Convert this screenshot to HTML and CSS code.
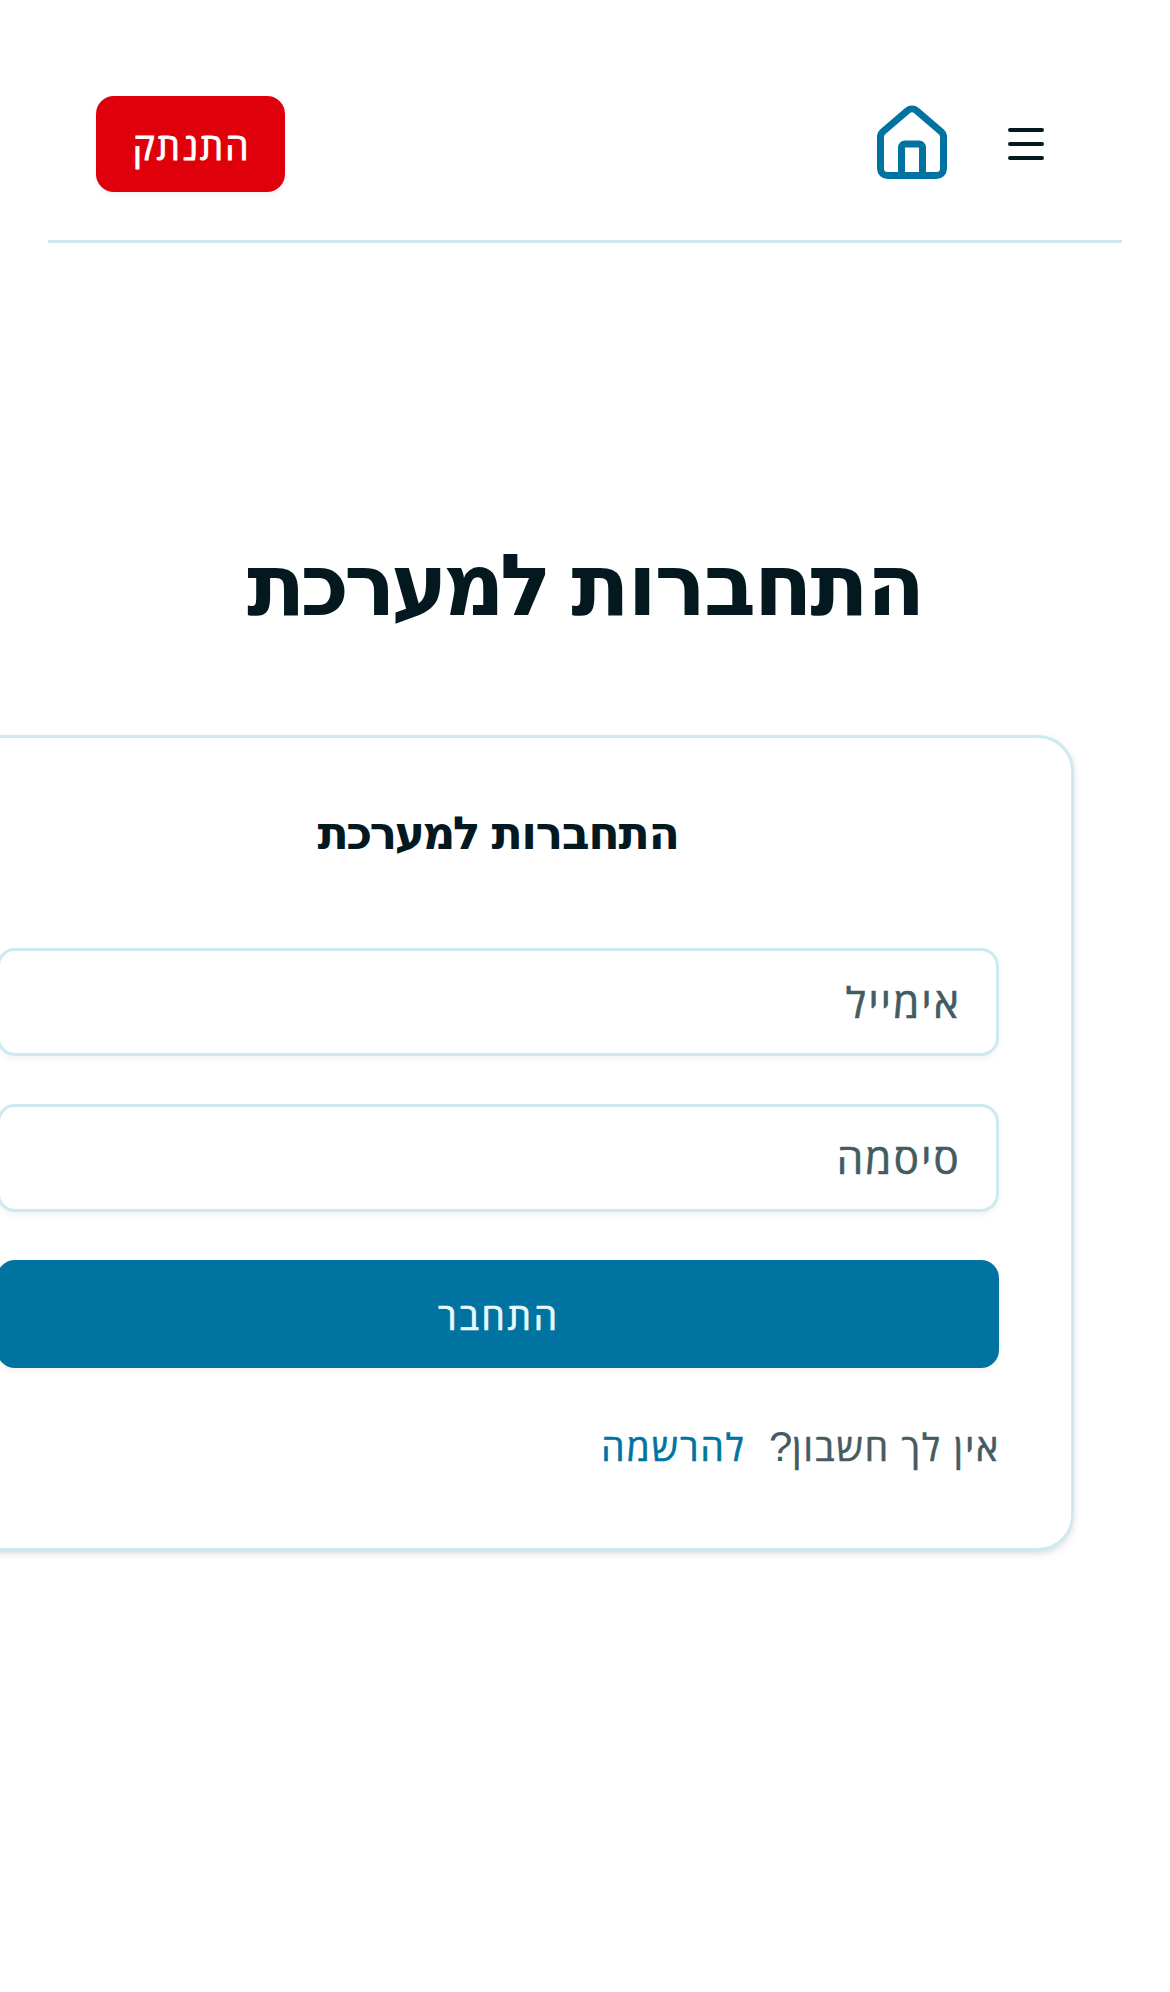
FILE: index.html
```html
<!DOCTYPE html>
<html lang="he" dir="rtl">
<head>
<meta charset="utf-8">
<title>התחברות למערכת</title>
<link rel="stylesheet" href="styles.css">
</head>
<body>
<header class="topbar">
  <nav class="nav">
    <button class="menu" aria-label="תפריט">
      <svg width="48" height="48" viewBox="0 0 24 24" fill="none" stroke="currentColor" stroke-width="2" stroke-linecap="round"><path d="M4 5h16M4 12h16M4 19h16"/></svg>
    </button>
    <a class="home" href="#" aria-label="בית">
      <svg width="84" height="84" viewBox="0 0 24 24" fill="none" stroke="currentColor" stroke-width="2" stroke-linecap="round" stroke-linejoin="round"><path d="M15 21v-8a1 1 0 0 0-1-1h-4a1 1 0 0 0-1 1v8"/><path d="M3 10a2 2 0 0 1 .709-1.528l7-5.999a2 2 0 0 1 2.582 0l7 5.999A2 2 0 0 1 21 10v9a2 2 0 0 1-2 2H5a2 2 0 0 1-2-2z"/></svg>
    </a>
  </nav>
  <button class="logout">התנתק</button>
</header>
<main class="page">
  <h1 class="heading">התחברות <span class="tight">למערכת</span></h1>
  <section class="card">
    <h2 class="title">התחברות <span class="tight">למערכת</span></h2>
    <form class="form">
      <input class="field" type="email" dir="rtl" placeholder="אימייל">
      <input class="field" type="password" dir="rtl" placeholder="סיסמה">
      <button class="submit" type="button">התחבר</button>
    </form>
    <p class="note"><span>אין לך חשבון<span class="mark">?</span></span><a class="link" href="#">להרשמה</a></p>
  </section>
</main>
</body>
</html>
```
FILE: styles.css
```css
* { box-sizing: border-box; margin: 0; }
html { overflow: hidden; }
body {
  background: #fff;
  color: #03191f;
  font-family: "Open Sans", "DejaVu Sans", sans-serif;
  font-size: 42px;
  overflow: hidden;
  height: 1992px;
}
button, input { font: inherit; border: 0; }
svg { display: block; }
.topbar {
  display: flex;
  justify-content: space-between;
  align-items: center;
  height: 243px;
  margin: 0 48px;
  padding: 48px 48px 0;
  border-bottom: 3px solid #cdeaf0;
}
.nav { display: flex; align-items: center; gap: 24px; }
.menu {
  display: grid;
  place-items: center;
  width: 96px;
  height: 96px;
  padding: 0;
  background: none;
  color: #03191f;
}
.home { color: #0073a0; }
.logout {
  width: 189px;
  height: 96px;
  padding: 3px 0 0 2px;
  border-radius: 18px;
  background: #df000c;
  color: #fff;
  font-size: 37px;
  font-weight: 500;
  letter-spacing: 1.9px;
  line-height: 60px;
  -webkit-text-stroke: .8px currentColor;
  box-shadow: 0 3px 6px rgba(0, 0, 0, .05);
}
.page { padding: 288px 96px 0; overflow: hidden; }
.heading {
  height: 108px;
  margin-bottom: 96px;
  font-family: "DejaVu Sans", sans-serif;
  font-size: 86px;
  font-weight: 700;
  letter-spacing: -2.5px;
  word-spacing: -3px;
  line-height: 108px;
  text-align: center;
}
.tight { letter-spacing: -.06em; }
.card {
  width: 1152px;
  height: 816px;
  margin-bottom: 24px;
  padding: 72px;
  border: 3px solid #cdeaf0;
  border-radius: 36px;
  box-shadow: 0 3px 9px rgba(0, 0, 0, .1), 0 3px 6px -3px rgba(0, 0, 0, .1);
}
.title {
  height: 48px;
  margin-bottom: 90px;
  font-family: "DejaVu Sans", sans-serif;
  font-size: 46px;
  font-weight: 600;
  letter-spacing: -1.5px;
  word-spacing: -1px;
  line-height: 47px;
  text-align: center;
}
.form { display: flex; flex-direction: column; gap: 48px; }
.field {
  width: 100%;
  height: 108px;
  padding: 0 35px 2px;
  border: 3px solid #cdeaf0;
  border-radius: 18px;
  background: transparent;
  letter-spacing: 2.3px;
  -webkit-text-stroke: .6px #435b61;
  box-shadow: 0 3px 6px rgba(0, 0, 0, .05);
}
.field::placeholder { color: #435b61; opacity: 1; }
.submit {
  height: 108px;
  padding: 3px 0 0 2px;
  border-radius: 18px;
  background: #0073a0;
  color: #e6fbff;
  font-size: 37px;
  font-weight: 500;
  letter-spacing: 2.8px;
  line-height: 60px;
  -webkit-text-stroke: .7px currentColor;
  box-shadow: 0 3px 6px rgba(0, 0, 0, .05);
}
.note {
  display: flex;
  gap: 23px;
  margin: 49px -1px 0 0;
  color: #435b61;
  font-size: 37px;
  letter-spacing: 2.1px;
  line-height: 60px;
  -webkit-text-stroke: .6px currentColor;
}
.mark { font-family: "Liberation Sans", sans-serif; font-size: 42px; letter-spacing: 0; line-height: 1; -webkit-text-stroke: 0; }
.link { color: #0073a0; text-decoration: none; }
```
